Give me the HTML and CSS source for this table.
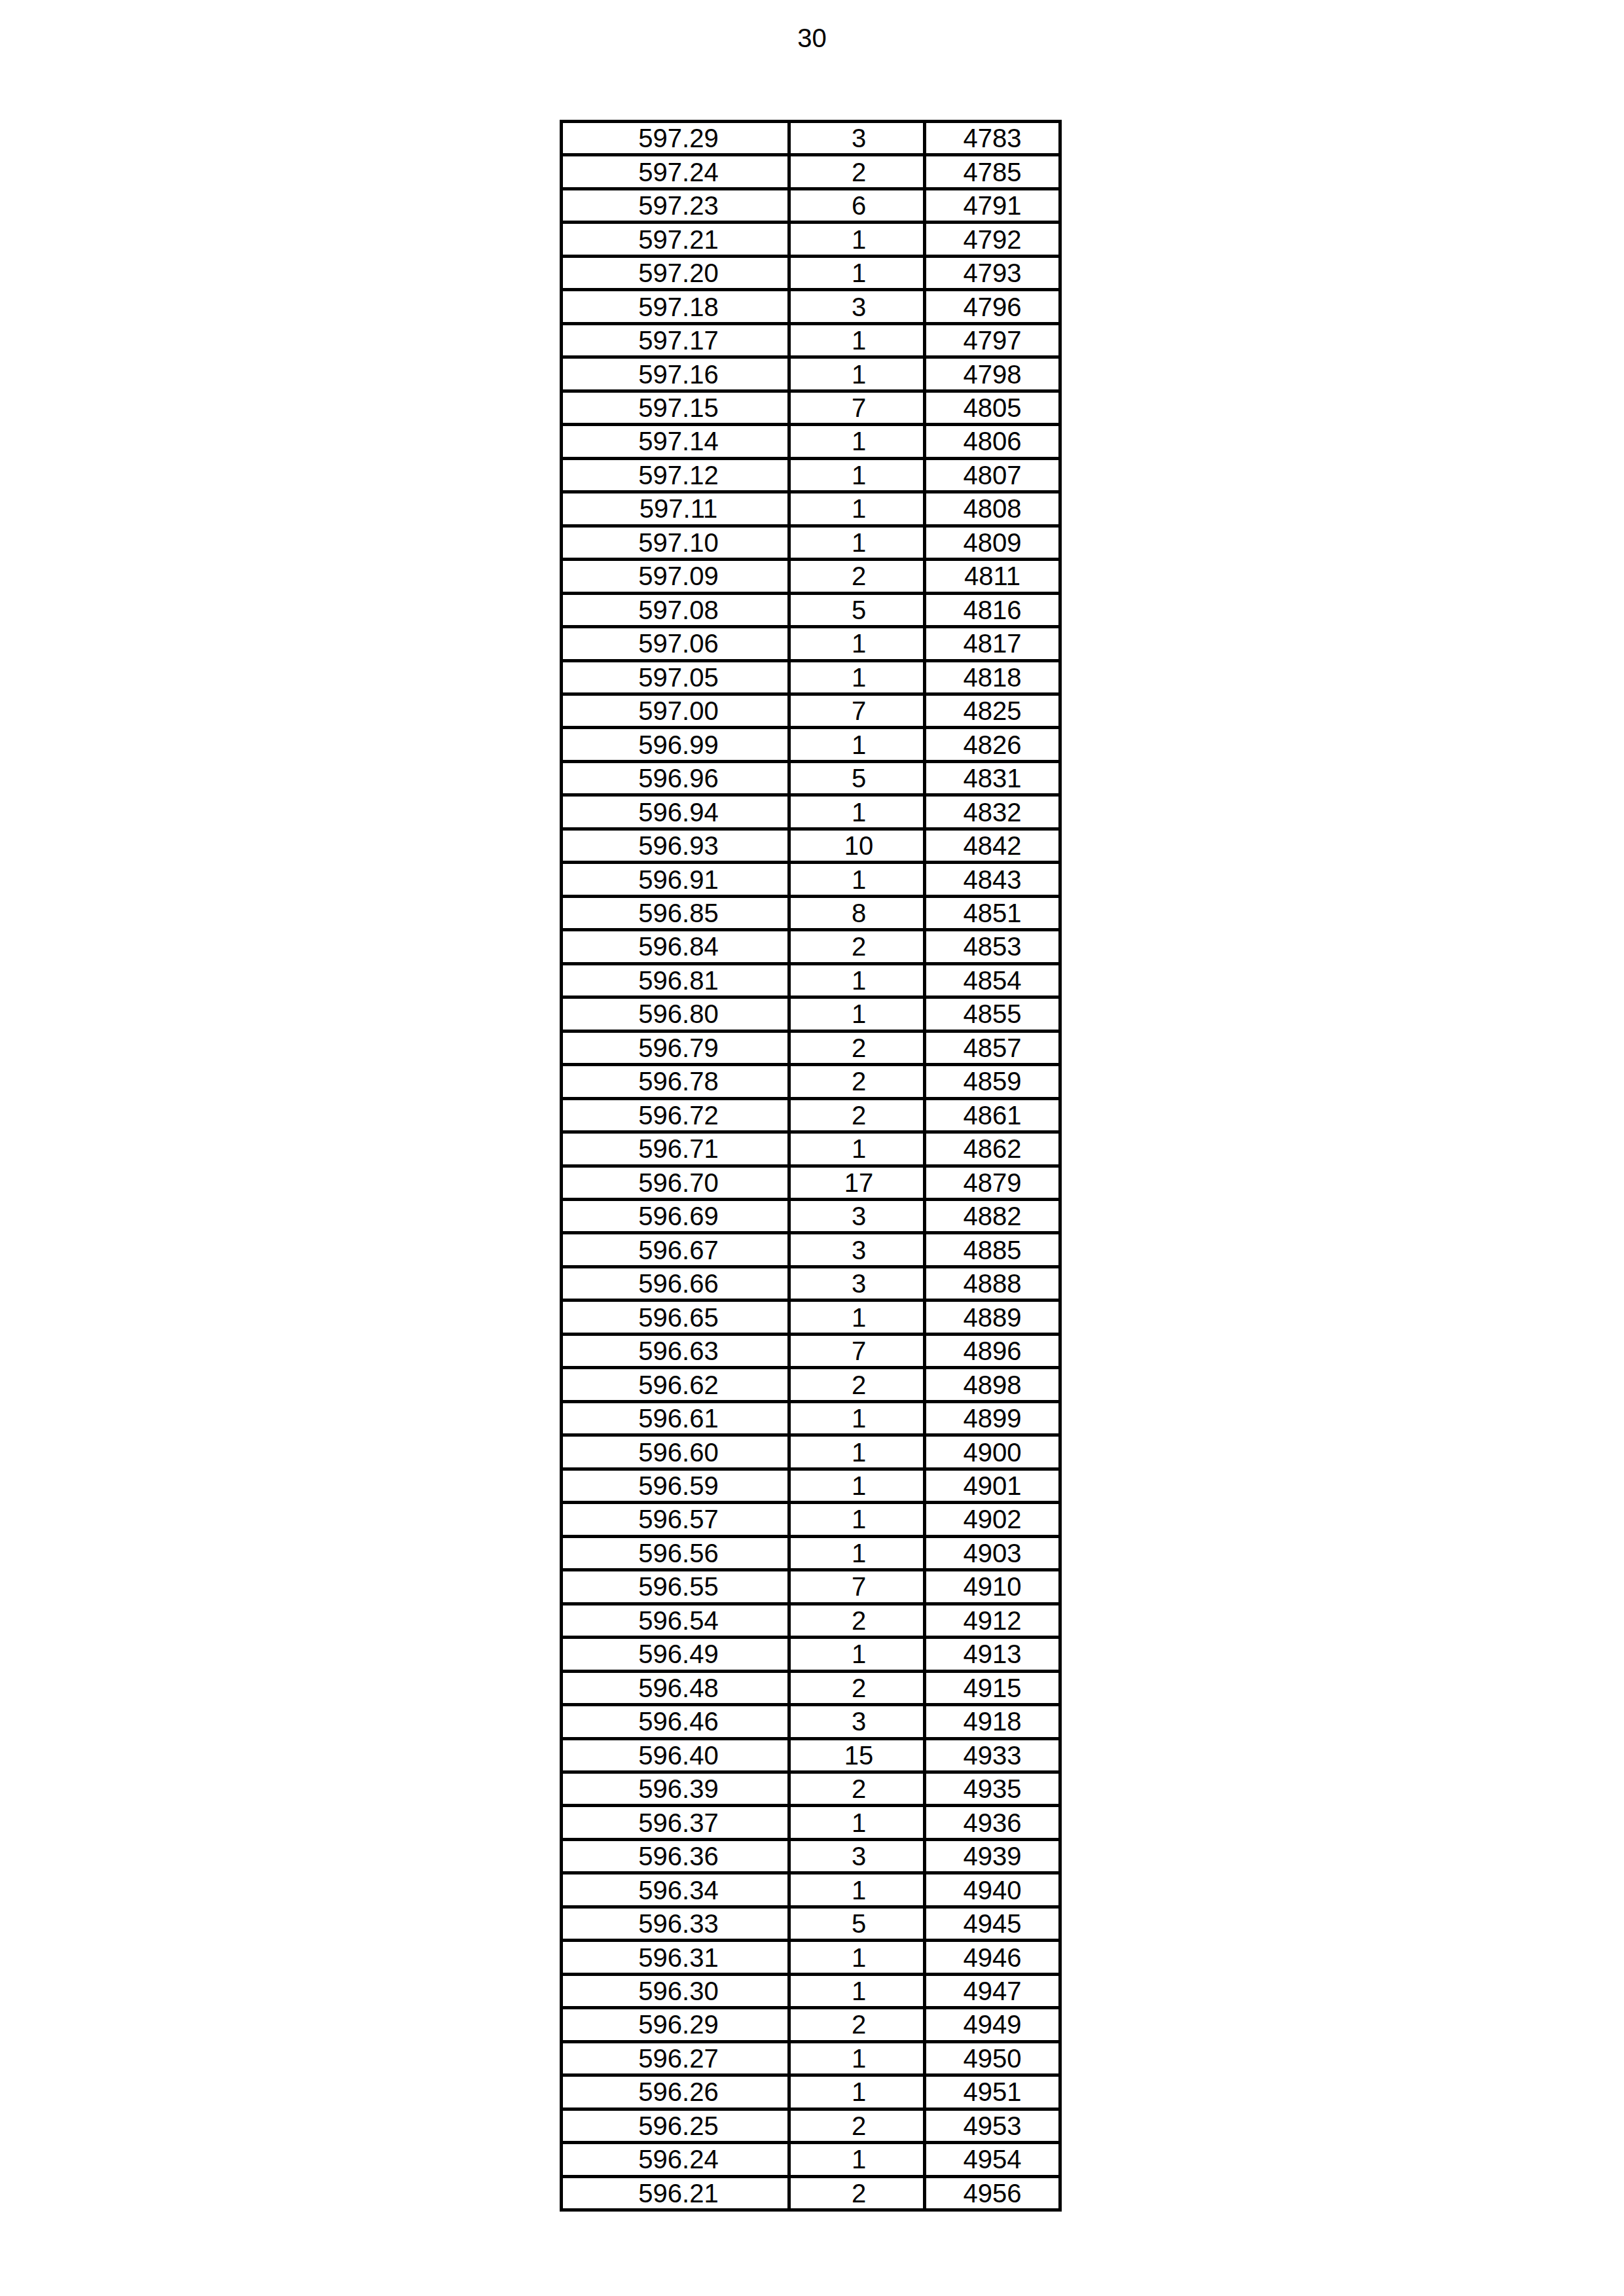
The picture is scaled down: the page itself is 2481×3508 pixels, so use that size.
FILE: index.html
```html
<!DOCTYPE html>
<html lang="en">
<head>
<meta charset="utf-8">
<title>Page 30</title>
<link rel="stylesheet" href="styles.css">
</head>
<body>
<div class="page">
  <div class="page-number">30</div>
  <table class="data-table">
    <colgroup>
      <col class="col-a">
      <col class="col-b">
      <col class="col-c">
    </colgroup>
    <tbody>
      <tr><td class="c1">597.29</td><td class="c2">3</td><td class="c3">4783</td></tr>
      <tr><td class="c1">597.24</td><td class="c2">2</td><td class="c3">4785</td></tr>
      <tr><td class="c1">597.23</td><td class="c2">6</td><td class="c3">4791</td></tr>
      <tr><td class="c1">597.21</td><td class="c2">1</td><td class="c3">4792</td></tr>
      <tr><td class="c1">597.20</td><td class="c2">1</td><td class="c3">4793</td></tr>
      <tr><td class="c1">597.18</td><td class="c2">3</td><td class="c3">4796</td></tr>
      <tr><td class="c1">597.17</td><td class="c2">1</td><td class="c3">4797</td></tr>
      <tr><td class="c1">597.16</td><td class="c2">1</td><td class="c3">4798</td></tr>
      <tr><td class="c1">597.15</td><td class="c2">7</td><td class="c3">4805</td></tr>
      <tr><td class="c1">597.14</td><td class="c2">1</td><td class="c3">4806</td></tr>
      <tr><td class="c1">597.12</td><td class="c2">1</td><td class="c3">4807</td></tr>
      <tr><td class="c1">597.11</td><td class="c2">1</td><td class="c3">4808</td></tr>
      <tr><td class="c1">597.10</td><td class="c2">1</td><td class="c3">4809</td></tr>
      <tr><td class="c1">597.09</td><td class="c2">2</td><td class="c3">4811</td></tr>
      <tr><td class="c1">597.08</td><td class="c2">5</td><td class="c3">4816</td></tr>
      <tr><td class="c1">597.06</td><td class="c2">1</td><td class="c3">4817</td></tr>
      <tr><td class="c1">597.05</td><td class="c2">1</td><td class="c3">4818</td></tr>
      <tr><td class="c1">597.00</td><td class="c2">7</td><td class="c3">4825</td></tr>
      <tr><td class="c1">596.99</td><td class="c2">1</td><td class="c3">4826</td></tr>
      <tr><td class="c1">596.96</td><td class="c2">5</td><td class="c3">4831</td></tr>
      <tr><td class="c1">596.94</td><td class="c2">1</td><td class="c3">4832</td></tr>
      <tr><td class="c1">596.93</td><td class="c2">10</td><td class="c3">4842</td></tr>
      <tr><td class="c1">596.91</td><td class="c2">1</td><td class="c3">4843</td></tr>
      <tr><td class="c1">596.85</td><td class="c2">8</td><td class="c3">4851</td></tr>
      <tr><td class="c1">596.84</td><td class="c2">2</td><td class="c3">4853</td></tr>
      <tr><td class="c1">596.81</td><td class="c2">1</td><td class="c3">4854</td></tr>
      <tr><td class="c1">596.80</td><td class="c2">1</td><td class="c3">4855</td></tr>
      <tr><td class="c1">596.79</td><td class="c2">2</td><td class="c3">4857</td></tr>
      <tr><td class="c1">596.78</td><td class="c2">2</td><td class="c3">4859</td></tr>
      <tr><td class="c1">596.72</td><td class="c2">2</td><td class="c3">4861</td></tr>
      <tr><td class="c1">596.71</td><td class="c2">1</td><td class="c3">4862</td></tr>
      <tr><td class="c1">596.70</td><td class="c2">17</td><td class="c3">4879</td></tr>
      <tr><td class="c1">596.69</td><td class="c2">3</td><td class="c3">4882</td></tr>
      <tr><td class="c1">596.67</td><td class="c2">3</td><td class="c3">4885</td></tr>
      <tr><td class="c1">596.66</td><td class="c2">3</td><td class="c3">4888</td></tr>
      <tr><td class="c1">596.65</td><td class="c2">1</td><td class="c3">4889</td></tr>
      <tr><td class="c1">596.63</td><td class="c2">7</td><td class="c3">4896</td></tr>
      <tr><td class="c1">596.62</td><td class="c2">2</td><td class="c3">4898</td></tr>
      <tr><td class="c1">596.61</td><td class="c2">1</td><td class="c3">4899</td></tr>
      <tr><td class="c1">596.60</td><td class="c2">1</td><td class="c3">4900</td></tr>
      <tr><td class="c1">596.59</td><td class="c2">1</td><td class="c3">4901</td></tr>
      <tr><td class="c1">596.57</td><td class="c2">1</td><td class="c3">4902</td></tr>
      <tr><td class="c1">596.56</td><td class="c2">1</td><td class="c3">4903</td></tr>
      <tr><td class="c1">596.55</td><td class="c2">7</td><td class="c3">4910</td></tr>
      <tr><td class="c1">596.54</td><td class="c2">2</td><td class="c3">4912</td></tr>
      <tr><td class="c1">596.49</td><td class="c2">1</td><td class="c3">4913</td></tr>
      <tr><td class="c1">596.48</td><td class="c2">2</td><td class="c3">4915</td></tr>
      <tr><td class="c1">596.46</td><td class="c2">3</td><td class="c3">4918</td></tr>
      <tr><td class="c1">596.40</td><td class="c2">15</td><td class="c3">4933</td></tr>
      <tr><td class="c1">596.39</td><td class="c2">2</td><td class="c3">4935</td></tr>
      <tr><td class="c1">596.37</td><td class="c2">1</td><td class="c3">4936</td></tr>
      <tr><td class="c1">596.36</td><td class="c2">3</td><td class="c3">4939</td></tr>
      <tr><td class="c1">596.34</td><td class="c2">1</td><td class="c3">4940</td></tr>
      <tr><td class="c1">596.33</td><td class="c2">5</td><td class="c3">4945</td></tr>
      <tr><td class="c1">596.31</td><td class="c2">1</td><td class="c3">4946</td></tr>
      <tr><td class="c1">596.30</td><td class="c2">1</td><td class="c3">4947</td></tr>
      <tr><td class="c1">596.29</td><td class="c2">2</td><td class="c3">4949</td></tr>
      <tr><td class="c1">596.27</td><td class="c2">1</td><td class="c3">4950</td></tr>
      <tr><td class="c1">596.26</td><td class="c2">1</td><td class="c3">4951</td></tr>
      <tr><td class="c1">596.25</td><td class="c2">2</td><td class="c3">4953</td></tr>
      <tr><td class="c1">596.24</td><td class="c2">1</td><td class="c3">4954</td></tr>
      <tr><td class="c1">596.21</td><td class="c2">2</td><td class="c3">4956</td></tr>
    </tbody>
  </table>
</div>
</body>
</html>
```

FILE: styles.css
```css
html, body {
  margin: 0;
  padding: 0;
  background: #ffffff;
}

.page {
  width: 2481px;
  min-height: 3508px;
  font-family: "Liberation Sans", Arial, sans-serif;
  color: #000000;
  padding-top: 35px;
  box-sizing: border-box;
}

.page-number {
  text-align: center;
  font-size: 40px;
  line-height: 46px;
  padding-left: 0;
}

.data-table {
  margin-top: 102px;
  margin-left: 855px;
  border-collapse: collapse;
  table-layout: fixed;
  width: 767px;
  font-size: 40px;
  border: 5px solid #000000;
}

.col-a { width: 348px; }
.col-b { width: 207px; }
.col-c { width: 207px; }

.data-table td {
  border: 5px solid #000000;
  padding: 0;
  height: 46.48px;
  line-height: 46px;
  text-align: center;
  vertical-align: middle;
  white-space: nowrap;
}

.data-table td.c1 {
  padding-left: 10px;
}

.data-table td.c2 {
  padding-left: 6px;
}
```
